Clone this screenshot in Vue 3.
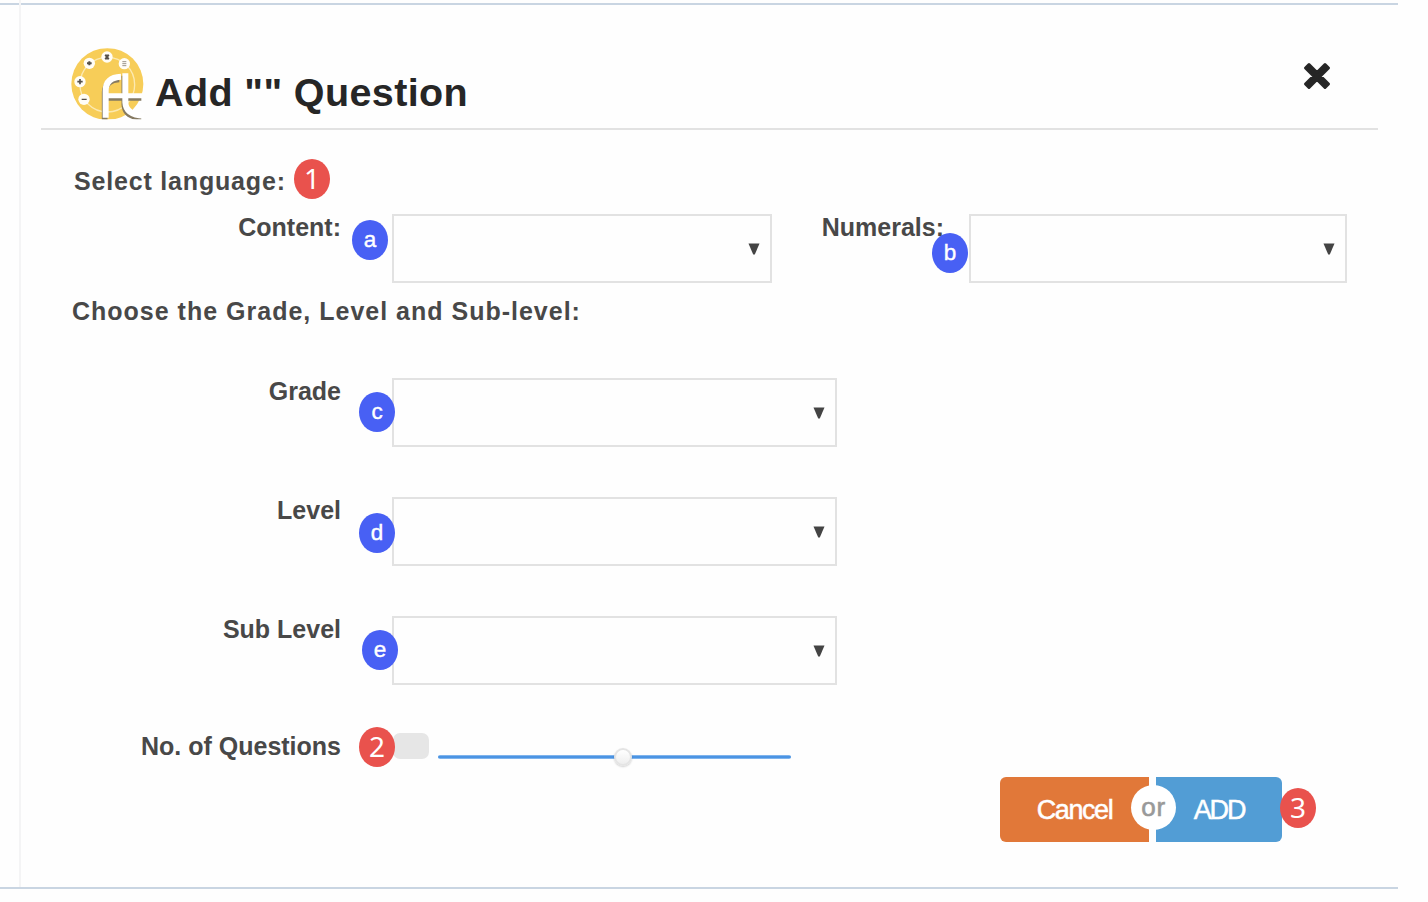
<script setup>
const levels = [
  { label: 'Grade', mark: 'c' },
  { label: 'Level', mark: 'd' },
  { label: 'Sub Level', mark: 'e' },
]
</script>

<template>
  <main class="dialog">
    <div class="rail"></div>
    <section class="panel">
      <header class="header">
        <svg class="logo" viewBox="33 23 219 216" aria-hidden="true">
          <defs>
            <clipPath id="disc"><rect x="33" y="24" width="219" height="213" /></clipPath>
          </defs>
          <g clip-path="url(#disc)">
            <circle cx="142" cy="131" r="108" fill="#f7cd58" />
            <circle cx="142" cy="133" r="82" fill="none" stroke="#fce9b0" stroke-width="4" />
            <g fill="#fffdf7">
              <circle cx="88" cy="69" r="17" /><circle cx="141" cy="50" r="17" /><circle cx="193" cy="70" r="17" />
              <circle cx="60" cy="124" r="17" /><circle cx="72" cy="177" r="17" />
            </g>
            <g fill="none" stroke="#55504a" stroke-width="5">
              <path d="M81 69h14M88 63v12" stroke-width="6" />
              <path d="M136 43l10 14M146 43l-10 14" stroke-width="6" />
              <path d="M187 64h12M187 70h12M187 76h12" stroke="#9a938a" stroke-width="3" />
              <path d="M52 124h16M60 116v16" /><path d="M65 177h15" stroke-width="4" />
            </g>
            <g fill="none" stroke="#857a62" stroke-width="17" transform="translate(-3 5)">
              <path d="M137 240V151q2-38 44-39" />
              <path d="M146 169H247" stroke-width="14" />
              <path d="M196 101V188q2 37 51 39" />
            </g>
            <g fill="none" stroke="#fff" stroke-width="18">
              <path d="M137 232V151q0-40 46-42" />
              <path d="M143 166H246" stroke-width="15" />
              <path d="M196 99V186q2 38 56 40" />
            </g>
          </g>
        </svg>
        <h1 class="title">Add "" Question</h1>
        <svg class="close" viewBox="0 0 28 28" aria-hidden="true">
          <path d="M6 2.5L14 10.5L22 2.5L25.5 6L17.5 14L25.5 22L22 25.5L14 17.5L6 25.5L2.5 22L10.5 14L2.5 6z" fill="#262626" stroke="#262626" stroke-width="3" stroke-linejoin="round" />
        </svg>
      </header>

      <div class="line language">
        Select language:<span class="badge red first">1</span>
      </div>

      <div class="languages">
        <span class="label">Content:</span>
        <div class="select content">
          <span class="badge mark-a">a</span>
          <svg class="arrow" viewBox="0 0 12 12"><path d="M.5.5h11L6.8 11.5H5.2z" fill="#444" /></svg>
        </div>
        <span class="label second-label">Numerals:</span>
        <div class="select numerals">
          <span class="badge mark-b">b</span>
          <svg class="arrow" viewBox="0 0 12 12"><path d="M.5.5h11L6.8 11.5H5.2z" fill="#444" /></svg>
        </div>
      </div>

      <div class="line choose">Choose the Grade, Level and Sub-level:</div>

      <div v-for="item in levels" :key="item.mark" class="level">
        <span class="label">{{ item.label }}</span>
        <div class="select">
          <span class="badge" :class="'mark-' + item.mark">{{ item.mark }}</span>
          <svg class="arrow" viewBox="0 0 12 12"><path d="M.5.5h11L6.8 11.5H5.2z" fill="#444" /></svg>
        </div>
      </div>

      <div class="count">
        <span class="label">No. of Questions</span>
        <div class="amount"><span class="badge red second">2</span></div>
        <div class="slider"><span class="knob"></span></div>
      </div>

      <div class="actions">
        <div class="button cancel">Cancel</div>
        <div class="button add">ADD</div>
        <span class="or">or</span>
        <span class="badge red third">3</span>
      </div>
    </section>
  </main>
</template>

<style>
body { background: #fefefe; }
</style>

<style scoped>
* { box-sizing: border-box; }
.dialog {
  display: flex; width: 1398px; height: 886px; margin-top: 3px;
  border-top: 2px solid #c9d5e2; border-bottom: 2px solid #c9d5e2;
  font-family: "Liberation Sans", Arial, sans-serif; color: #484848;
}
.rail { width: 21px; margin-top: -5px; border-right: 2px solid #f4f4f5; }
.panel { flex: 1; }
.header {
  display: flex; align-items: flex-start; width: 1337px; height: 125px;
  margin-left: 20px; padding: 43px 47px 0 30px;
  border-bottom: 2px solid #e2e2e2;
}
.logo { width: 73px; height: 72px; flex: none; }
.title {
  margin: 21px 0 0 11px; font-size: 39.5px; line-height: 46px; font-weight: 700;
  letter-spacing: .38px; color: #262626; white-space: pre;
}
.close { width: 28px; height: 28px; margin: 14px 0 0 auto; }
.line, .label { font-size: 25px; line-height: 30px; font-weight: 700; white-space: nowrap; }
.language { position: relative; width: 300px; margin: 36px 0 0 53px; letter-spacing: .82px; }
.label { width: 320px; margin: -2px 51px 0 0; text-align: right; }
.languages, .level, .count { display: flex; }
.languages { margin-top: 18px; }
.second-label { width: 172px; margin-right: 25px; }
.select {
  position: relative; display: flex; justify-content: flex-end;
  width: 445px; height: 69px; border: 2px solid #e2e2e2; padding: 27px 10px 0 0;
}
.content { width: 380px; }
.numerals { width: 378px; }
.arrow { width: 12px; height: 12px; }
.choose { height: 30px; margin: 13px 0 52px 51px; letter-spacing: 1px; }
.level { height: 119px; }
.count { margin-top: -3px; }
.count .label { margin-top: -1px; }
.amount { position: relative; width: 36px; height: 26px; margin: 1px 0 0 1px; background: #e6e6e6; border-radius: 7px; }
.badge {
  position: absolute; display: flex; align-items: center; justify-content: center;
  width: 36px; height: 40px; border-radius: 50%; background: #4860f4; color: #fff;
  font: 400 22.5px/40px "Liberation Sans", Arial, sans-serif; letter-spacing: 0;
  -webkit-text-stroke: .4px #fff;
}
.red { background: #e9524d; font: 400 28px/38px "Noto Sans", sans-serif; -webkit-text-stroke: 0; padding-bottom: 2px; }
.first { left: 220px; top: -7px; }
.mark-a { left: -42px; top: 4px; }
.mark-b { left: -39px; top: 17px; }
.mark-c { left: -35px; top: 12px; }
.mark-d { left: -35px; top: 14px; }
.mark-e { left: -32px; top: 12px; }
.second { left: -34px; top: -6px; }
.slider {
  position: relative; width: 353px; height: 4px; margin: 23px 0 0 9px; border-radius: 2px;
  background: linear-gradient(#9cc5f2, #4b94e3 35%, #4b94e3 65%, #9cc5f2);
}
.knob {
  position: absolute; left: 176px; top: -7px; width: 18px; height: 18px; border-radius: 50%;
  background: linear-gradient(#fff, #eee); border: 2px solid #e4e4e4; box-shadow: 0 1px 2px rgba(0, 0, 0, .18);
}
.actions { position: relative; display: flex; gap: 7px; width: 283px; height: 65px; margin: 16px 0 0 979px; }
.button { display: flex; align-items: center; justify-content: center; font-size: 27px; padding-top: 2px; color: #fff; -webkit-text-stroke: .5px #fff; }
.cancel { width: 149px; background: #e17839; border-radius: 6px 0 0 6px; letter-spacing: -1.4px; }
.add { width: 126px; background: #529dd5; border-radius: 0 6px 6px 0; letter-spacing: -2.2px; }
.or {
  position: absolute; left: 131px; top: 8px; width: 45px; height: 45px; border-radius: 50%;
  background: #fff; color: #999; font-size: 26px; line-height: 44px; text-align: center;
  -webkit-text-stroke: .6px #999; letter-spacing: .8px;
}
.third { left: 280px; top: 11px; }
</style>
